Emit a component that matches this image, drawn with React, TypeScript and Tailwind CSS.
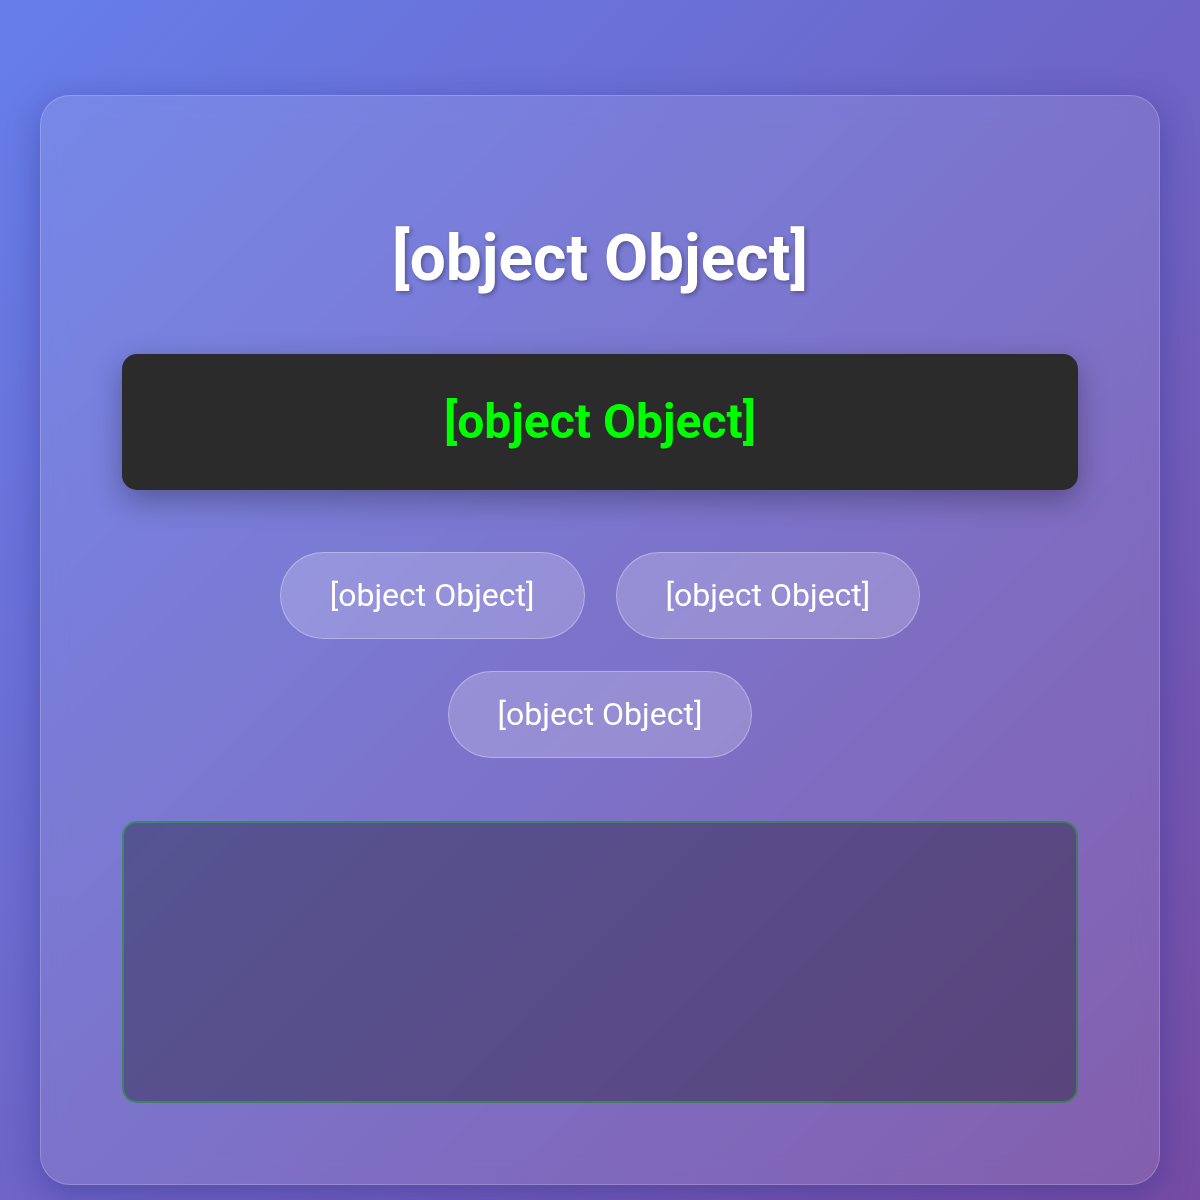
export default function App() {
  const label = String({});
  const buttons = [label, label, label];

  return (
    <div
      className="min-h-screen bg-[linear-gradient(135deg,#667eea_0%,#764ba2_100%)] px-10 pt-[95px] pb-10"
      style={{ fontFamily: "Roboto, 'Liberation Sans', sans-serif" }}
    >
      <div className="rounded-[30px] border border-white/20 bg-white/10 px-[81px] pt-[125px] pb-[81px] shadow-[0_8px_32px_rgba(31,38,135,0.37)] backdrop-blur-md">
        <h1 className="text-center text-[64px] leading-[75px] font-bold text-white [text-shadow:2px_2px_4px_rgba(0,0,0,0.3)]">
          {label}
        </h1>

        <div className="mt-[58px] rounded-[15px] bg-[#2b2b2b] py-10 text-center shadow-[0_10px_30px_rgba(0,0,0,0.3)]">
          <span className="text-5xl leading-[56px] font-bold text-[#00ff00]">{label}</span>
        </div>

        <div className="mt-[62px] flex flex-wrap justify-center gap-x-[31px] gap-y-8 px-[140px]">
          {buttons.map((b, i) => (
            <button
              key={i}
              className="rounded-full border border-white/30 bg-white/20 px-[49px] py-6 text-[32px] leading-[37px] text-white"
            >
              {b}
            </button>
          ))}
        </div>

        <div className="mt-[63px] h-[282px] rounded-[15px] border-2 border-[#00ff00]/30 bg-black/30" />
      </div>
    </div>
  );
}
